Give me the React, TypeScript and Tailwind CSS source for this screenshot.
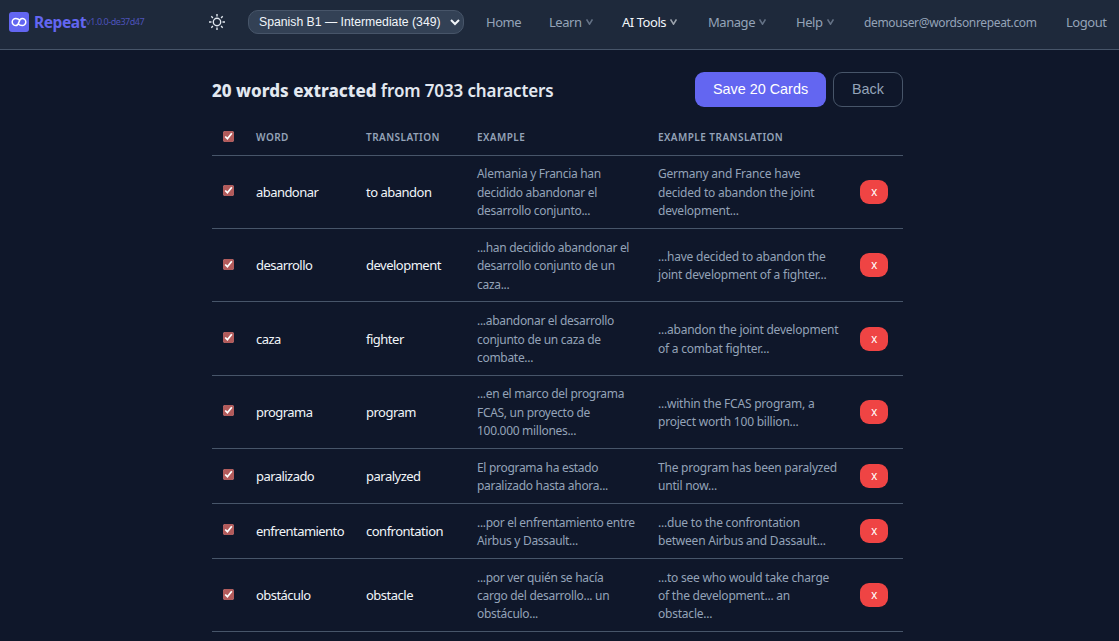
import React, { useState } from 'react';

interface ExtractedWord {
  word: string;
  translation: string;
  example: string;
  exampleTranslation: string;
}

const WORDS: ExtractedWord[] = [
  {
    word: 'abandonar',
    translation: 'to abandon',
    example: 'Alemania y Francia han\ndecidido abandonar el\ndesarrollo conjunto...',
    exampleTranslation: 'Germany and France have\ndecided to abandon the joint\ndevelopment...',
  },
  {
    word: 'desarrollo',
    translation: 'development',
    example: '...han decidido abandonar el\ndesarrollo conjunto de un\ncaza...',
    exampleTranslation: '...have decided to abandon the\njoint development of a fighter...',
  },
  {
    word: 'caza',
    translation: 'fighter',
    example: '...abandonar el desarrollo\nconjunto de un caza de\ncombate...',
    exampleTranslation: '...abandon the joint development\nof a combat fighter...',
  },
  {
    word: 'programa',
    translation: 'program',
    example: '...en el marco del programa\nFCAS, un proyecto de\n100.000 millones...',
    exampleTranslation: '...within the FCAS program, a\nproject worth 100 billion...',
  },
  {
    word: 'paralizado',
    translation: 'paralyzed',
    example: 'El programa ha estado\nparalizado hasta ahora...',
    exampleTranslation: 'The program has been paralyzed\nuntil now...',
  },
  {
    word: 'enfrentamiento',
    translation: 'confrontation',
    example: '...por el enfrentamiento entre\nAirbus y Dassault...',
    exampleTranslation: '...due to the confrontation\nbetween Airbus and Dassault...',
  },
  {
    word: 'obstáculo',
    translation: 'obstacle',
    example: '...por ver quién se hacía\ncargo del desarrollo... un\nobstáculo...',
    exampleTranslation: '...to see who would take charge\nof the development... an\nobstacle...',
  },
];

function Logo() {
  return (
    <svg width="20" height="20" viewBox="0 0 20 20" fill="none" className="shrink-0">
      <rect width="20" height="20" rx="3" fill="#6366f1" />
      <path
        d="M10.800 8.300C9.700 7 8.300 6.400 6.800 6.400a3.600 3.600 0 0 0 0 7.200C8.800 13.600 9.400 12.200 10 10s1.200-3.600 3.200-3.600a3.600 3.600 0 0 1 0 7.200C11.700 13.600 10.300 13 9.200 11.700"
        stroke="white"
        strokeWidth="1.5"
      />
    </svg>
  );
}

function SunIcon() {
  return (
    <svg width="18" height="18" viewBox="0 0 18 18" fill="none" stroke="currentColor" strokeWidth="1.4">
      <circle cx="9" cy="9" r="3.7" />
      <path d="M9 1v2.500M9 14.500V17M1 9h2.500M14.500 9H17M3.300 3.300l1.600 1.600M13.100 13.100l1.600 1.600M3.300 14.700l1.600-1.600M13.100 4.900l1.600-1.600" />
    </svg>
  );
}

interface NavItemProps {
  label: string;
  className: string;
  active?: boolean;
  menu?: boolean;
}

function NavItem({ label, className, active, menu }: NavItemProps) {
  return (
    <a
      href="#"
      className={`flex shrink-0 items-center pt-[2px] whitespace-nowrap ${active ? 'text-[#f1f5f9]' : 'text-[#94a3b8]'} ${className}`}
    >
      {label}
      {menu && (
        <svg width="7" height="6" viewBox="0 0 7 6" fill="none" className="mb-[2px] ml-1 opacity-60">
          <path d="M0.600 0.500L3.500 5.200L6.400 0.500" stroke="currentColor" strokeWidth="1.500" />
        </svg>
      )}
    </a>
  );
}

function Navbar() {
  return (
    <nav className="flex h-[50px] items-center border-b border-[#475569] bg-[#1e293b] pb-[5px] pl-[9px] text-[13px] tracking-[-0.45px]">
      <div className="flex w-[199px] shrink-0 items-center">
        <Logo />
        <span className="ml-[5px] pt-px text-[15.500px] font-bold tracking-[-0.400px] text-[#6366f1]">Repeat</span>
        <span className="text-[9px] tracking-[-0.450px] text-[#6366f1]/70">v1.0.0-de37d47</span>
      </div>
      <button className="w-[40px] shrink-0 text-[#e2e8f0]" aria-label="Toggle theme">
        <SunIcon />
      </button>
      <select className="mr-[22px] h-6 w-[216px] shrink-0 rounded-[10px] border border-[#475569] bg-[#334155] px-[6px] font-['Liberation_Sans',sans-serif] text-[12.240px] tracking-normal text-[#f1f5f9]">
        <option>Spanish B1 — Intermediate (349)</option>
      </select>
      <NavItem label="Home" className="w-[63px]" />
      <NavItem label="Learn" className="w-[73px]" menu />
      <NavItem label="AI Tools" className="w-[86px]" active menu />
      <NavItem label="Manage" className="w-[88px]" menu />
      <NavItem label="Help" className="w-[68px]" menu />
      <span className="w-[202px] shrink-0 pt-[2px] text-[12px] tracking-[-0.350px] text-[#94a3b8]">demouser@wordsonrepeat.com</span>
      <NavItem label="Logout" className="" />
    </nav>
  );
}

interface CheckProps {
  checked: boolean;
  onChange: () => void;
}

function Check({ checked, onChange }: CheckProps) {
  return (
    <input
      type="checkbox"
      checked={checked}
      onChange={onChange}
      className="mb-[2px] block h-[11px] w-[11px] accent-[#b25b5b]"
    />
  );
}

export default function App() {
  const [words, setWords] = useState(WORDS);
  const [skipped, setSkipped] = useState<string[]>([]);

  const toggle = (word: string) =>
    setSkipped(skipped.includes(word) ? skipped.filter((w) => w !== word) : [...skipped, word]);

  const toggleAll = () => setSkipped(skipped.length ? [] : words.map((w) => w.word));

  return (
    <div className="h-screen overflow-hidden bg-[#0f172a] font-['Noto_Sans',sans-serif] text-[#e2e8f0]">
      <Navbar />

      <main className="ml-[212px] w-[691px] pt-[22px]">
        <div className="flex h-[35px] items-center">
          <h2 className="flex-1 pt-[2px] whitespace-nowrap text-[17px] font-semibold tracking-[-0.130px]">
            <strong className="font-extrabold tracking-[0.010px]">20 words extracted</strong> from 7033 characters
          </h2>
          <div className="flex gap-[7px] font-['Liberation_Sans',sans-serif] text-[14.400px]">
            <button className="h-[35px] w-[131px] rounded-[9px] bg-[#6366f1] text-white">Save 20 Cards</button>
            <button className="h-[35px] w-[70px] rounded-[9px] border border-[#475569] text-[#94a3b8]">Back</button>
          </div>
        </div>

        <table className="mt-[13px] w-full table-fixed border-collapse text-left">
          <colgroup>
            <col className="w-[33px]" />
            <col className="w-[110px]" />
            <col className="w-[111px]" />
            <col className="w-[181px]" />
            <col className="w-[202px]" />
            <col className="w-[54px]" />
          </colgroup>
          <thead>
            <tr className="h-[35.200px] border-b border-[#475569] text-[10px] tracking-[0.450px] text-[#94a3b8] uppercase">
              <th className="px-[11px]">
                <Check checked={skipped.length === 0} onChange={toggleAll} />
              </th>
              <th className="px-[11px] pt-px font-semibold">Word</th>
              <th className="px-[11px] pt-px font-semibold">Translation</th>
              <th className="px-[11px] pt-px font-semibold">Example</th>
              <th className="px-[11px] pt-px font-semibold">Example Translation</th>
              <th />
            </tr>
          </thead>
          <tbody>
            {words.map((w) => (
              <tr key={w.word} className="border-b border-[#475569] text-[13px] tracking-[-0.550px] text-[#f1f5f9]">
                <td className="px-[11px]">
                  <Check checked={!skipped.includes(w.word)} onChange={() => toggle(w.word)} />
                </td>
                <td className="px-[11px] pt-[2px]">{w.word}</td>
                <td className="px-[11px] pt-[2px] tracking-[-0.500px]">{w.translation}</td>
                <td className="px-[11px] pt-[9.800px] pb-[7.460px] text-[12px] leading-[18.360px] tracking-[-0.300px] whitespace-pre text-[#94a3b8]">
                  {w.example}
                </td>
                <td className="px-[11px] pt-[9.800px] pb-[7.460px] text-[12px] leading-[18.360px] tracking-[-0.220px] whitespace-pre text-[#94a3b8]">
                  {w.exampleTranslation}
                </td>
                <td className="px-[11px]">
                  <button
                    onClick={() => setWords(words.filter((x) => x.word !== w.word))}
                    className="block h-6 w-7 rounded-[9px] bg-[#ef4444] font-['Liberation_Sans',sans-serif] text-[12px] text-white"
                  >
                    x
                  </button>
                </td>
              </tr>
            ))}
          </tbody>
        </table>
      </main>
    </div>
  );
}
